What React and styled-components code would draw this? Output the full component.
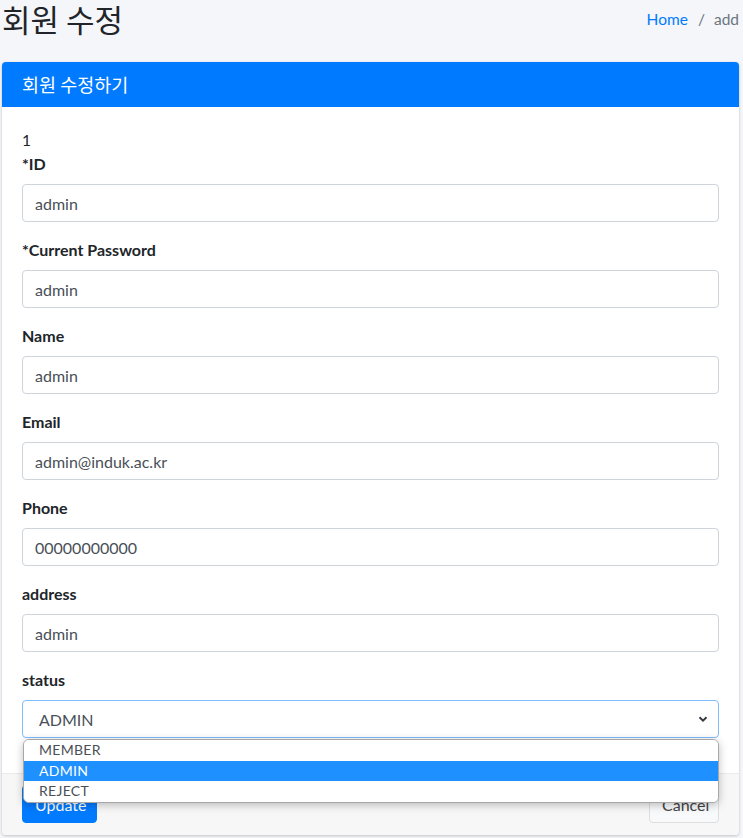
import React from "react";
import styled, { createGlobalStyle } from "styled-components";

const GlobalStyle = createGlobalStyle`
  html, body {
    margin: 0;
    padding: 0;
    background: #f4f6f9;
    font-family: "Lato", "Noto Sans CJK KR", sans-serif;
    color: #212529;
  }
  * { box-sizing: border-box; }
`;

const Page = styled.div`
  padding: 0 4px 0 2px;
  height: 838px;
  overflow: hidden;
`;

const HeaderRow = styled.div`
  display: flex;
  align-items: flex-start;
  justify-content: space-between;
  height: 62px;
`;

const Title = styled.h1`
  margin: 0;
  font-family: "Noto Sans CJK KR", sans-serif;
  font-weight: 400;
  font-size: 31px;
  line-height: 38px;
`;

const Breadcrumb = styled.ol`
  display: flex;
  list-style: none;
  margin: 7px 0 0;
  padding: 0;
  font-size: 15.5px;
  line-height: 24px;
  color: #6c757d;
`;

const Crumb = styled.li`
  color: ${(p) => (p.$link ? "#007bff" : "#6c757d")};
`;

const Slash = styled.li`
  padding: 0 9px 0 10px;
  color: #6c757d;
`;

const Card = styled.div`
  background: #fff;
  border-radius: 4px;
  box-shadow: 0 0 1px rgba(0, 0, 0, 0.125), 0 1px 3px rgba(0, 0, 0, 0.2);
`;

const CardHeader = styled.div`
  background: #007bff;
  color: #fff;
  border-radius: 4px 4px 0 0;
  padding: 12px 20px;
  height: 45px;
`;

const CardTitle = styled.h3`
  margin: 0;
  font-family: "Noto Sans CJK KR", sans-serif;
  font-weight: 400;
  font-size: 18.5px;
  line-height: 21px;
`;

const CardBody = styled.div`
  padding: 21px 20px 19px;
`;

const Line = styled.div`
  font-size: 15.5px;
  line-height: 24px;
  color: #212529;
`;

const Group = styled.div`
  margin-bottom: 16px;
  position: relative;
`;

const Label = styled.label`
  display: block;
  font-weight: 700;
  font-size: 16px;
  line-height: 24px;
  margin-bottom: 8px;
`;

const Input = styled.div`
  height: 38px;
  border: 1px solid ${(p) => (p.$focus ? "#80bdff" : "#ced4da")};
  border-radius: 4px;
  padding: ${(p) => (p.$select ? "0 10px 0 16px" : "0 12px")};
  display: flex;
  align-items: center;
  justify-content: space-between;
  font-size: 16px;
  color: #495057;
  background: #fff;
`;

const Menu = styled.ul`
  position: absolute;
  left: 1px;
  right: 0;
  top: 71px;
  margin: 0;
  padding: 0;
  list-style: none;
  background: #fff;
  border: 1px solid #a7a7a7;
  border-radius: 6px;
  overflow: hidden;
  box-shadow: 0 2px 8px rgba(0, 0, 0, 0.25);
  z-index: 5;
`;

const Option = styled.li`
  height: 20.5px;
  line-height: 20.5px;
  padding-left: 15px;
  font-size: 14px;
  letter-spacing: 0.3px;
  color: ${(p) => (p.$active ? "#fff" : "#495057")};
  background: ${(p) => (p.$active ? "#1e90ff" : "#fff")};
`;

const CardFooter = styled.div`
  background: #f7f7f7;
  border-top: 1px solid rgba(0, 0, 0, 0.05);
  border-radius: 0 0 4px 4px;
  padding: 11px 20px 12px;
  display: flex;
  justify-content: space-between;
`;

const Button = styled.button`
  height: 38px;
  padding: 0 12px;
  border-radius: 4px;
  font-family: "Lato", sans-serif;
  font-size: 16px;
  border: 1px solid ${(p) => (p.$primary ? "#007bff" : "#ddd")};
  background: ${(p) => (p.$primary ? "#007bff" : "#f8f9fa")};
  color: ${(p) => (p.$primary ? "#fff" : "#444")};
  width: ${(p) => (p.$primary ? "75px" : "70px")};
`;

const fields = [
  { label: "*ID", value: "admin" },
  { label: "*Current Password", value: "admin" },
  { label: "Name", value: "admin" },
  { label: "Email", value: "admin@induk.ac.kr" },
  { label: "Phone", value: "00000000000" },
  { label: "address", value: "admin" },
];

const options = ["MEMBER", "ADMIN", "REJECT"];

const Chevron = () => (
  <svg width="10" height="8" viewBox="0 0 10 8">
    <path d="M1.5 2.2 5 5.6 8.5 2.2" fill="none" stroke="#343a40" strokeWidth="2" />
  </svg>
);

export default function App() {
  return (
    <>
      <GlobalStyle />
      <Page>
        <HeaderRow>
          <Title>회원 수정</Title>
          <Breadcrumb>
            <Crumb $link>Home</Crumb>
            <Slash>/</Slash>
            <Crumb>add</Crumb>
          </Breadcrumb>
        </HeaderRow>
        <Card>
          <CardHeader>
            <CardTitle>회원 수정하기</CardTitle>
          </CardHeader>
          <CardBody>
            <Line>1</Line>
            {fields.map((f) => (
              <Group key={f.label}>
                <Label>{f.label}</Label>
                <Input>{f.value}</Input>
              </Group>
            ))}
            <Group>
              <Label>status</Label>
              <Input $select $focus>
                <span>ADMIN</span>
                <Chevron />
              </Input>
              <Menu>
                {options.map((o) => (
                  <Option key={o} $active={o === "ADMIN"}>
                    {o}
                  </Option>
                ))}
              </Menu>
            </Group>
          </CardBody>
          <CardFooter>
            <Button $primary>Update</Button>
            <Button>Cancel</Button>
          </CardFooter>
        </Card>
      </Page>
    </>
  );
}
